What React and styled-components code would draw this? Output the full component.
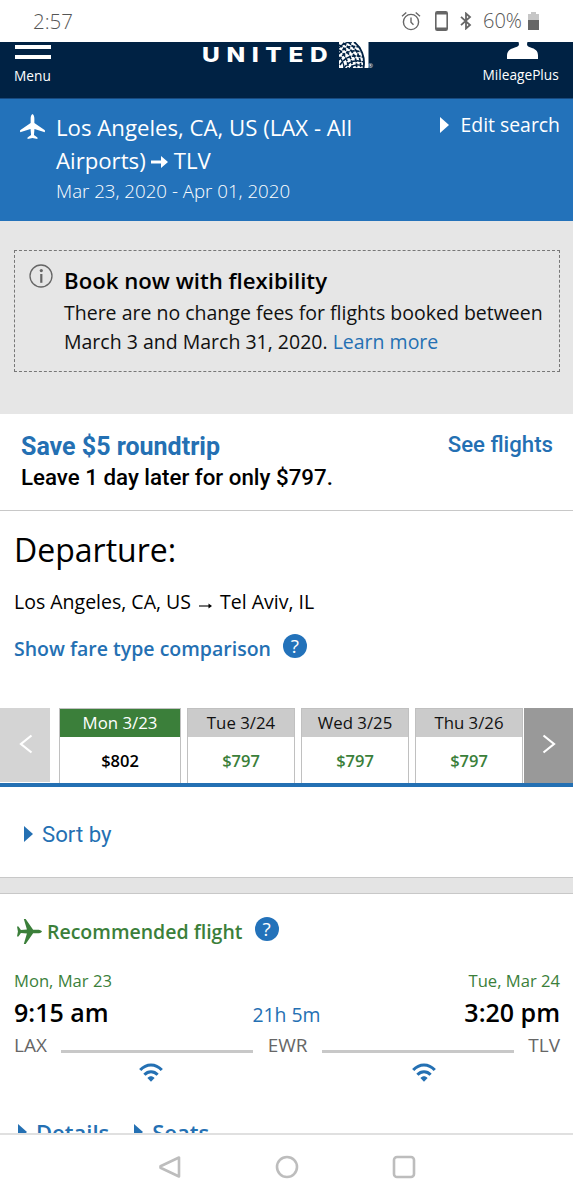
import React from "react";
import styled, { createGlobalStyle, css } from "styled-components";

const c = {
  navy: "#002244",
  blue: "#2372ba",
  link: "#2470b3",
  green: "#3b7f3a",
  grey: "#e6e6e6",
  line: "#c8c8c8",
  muted: "#666",
};

const GlobalStyle = createGlobalStyle`
  * { box-sizing: border-box; }
  body { margin: 0; background: #fff; }
  p, h1, h2, h3 { margin: 0; }
`;

const type = css`
  font-size: ${(p) => p.$size}px;
  line-height: ${(p) => p.$lh}px;
  white-space: nowrap;
`;

const Screen = styled.main`
  width: 573px;
  height: 1200px;
  overflow: hidden;
  display: flex;
  flex-direction: column;
  font-family: "Open Sans", "Noto Sans", sans-serif;
  color: #000;
  background: #fff;
`;

/* Status bar */
const StatusBar = styled.div`
  flex: none;
  height: 42px;
  padding: 0 34px 0 33px;
  display: flex;
  align-items: center;
  justify-content: space-between;
  color: ${c.muted};
`;
const StatusText = styled.span`
  ${type}
  font-weight: 300;
  color: #555;
`;
const StatusIcons = styled.div`
  display: flex;
  align-items: center;
  height: 42px;
`;
const AlarmSvg = styled.svg`margin-right: 14px;`;
const PhoneSvg = styled.svg`margin-right: 12px;`;
const BluetoothSvg = styled.svg`margin-right: 11px;`;
const BatterySvg = styled.svg`margin-left: 6px;`;

/* Site header */
const Header = styled.header`
  flex: none;
  height: 57px;
  background: ${c.navy};
  border-bottom: 1px solid #174a80;
  display: grid;
  grid-template-columns: 202px 1fr 104px;
  color: #fff;
  overflow: hidden;
`;
const MenuButton = styled.div`
  padding: 3px 0 0 14px;
`;
const Bars = styled.div`
  width: 36px;
  height: 14px;
  margin-left: 1px;
  border-top: 4px solid #fff;
  border-bottom: 4px solid #fff;
`;
const HeaderLabel = styled.div`
  ${type}
`;
const Brand = styled.div`
  display: flex;
  align-items: flex-start;
`;
const BrandName = styled.span`
  width: 137px;
  font-family: Inter, "Open Sans", sans-serif;
  font-weight: 800;
  font-size: 20.5px;
  line-height: 26px;
  letter-spacing: 5.6px;
  transform: scaleX(1.19);
  transform-origin: 0 0;
  white-space: nowrap;
`;
const Registered = styled.span`
  font-size: 6px;
  line-height: 8px;
  margin: 20px 0 0 -1px;
`;
const Account = styled.div`
  display: flex;
  flex-direction: column;
  align-items: flex-start;
  padding-left: 13.5px;
`;
const PersonSvg = styled.svg`
  margin-left: 24px;
`;

/* Trip summary */
const Trip = styled.section`
  flex: none;
  height: 122px;
  background: ${c.blue};
  color: #fff;
  display: flex;
  padding: 12px 13px 0 20px;
`;
const TripPlane = styled.svg`
  flex: none;
  margin: 3px 11px 0 0;
`;
const TripText = styled.div`
  flex: 1;
`;
const TripTitle = styled.h1`
  ${type}
  font-weight: 400;
`;
const TripArrow = styled.svg`
  margin: 0 6px 2px 5px;
  vertical-align: middle;
`;
const TripDates = styled.p`
  ${type}
  font-weight: 300;
`;
const EditSearch = styled.div`
  ${type}
  display: flex;
  align-items: center;
  height: 28px;
`;
const Caret = styled.svg`
  flex: none;
  margin-right: ${(p) => p.$gap}px;
`;

/* Flexibility notice */
const NoticeBand = styled.section`
  flex: none;
  height: 193px;
  background: ${c.grey};
  padding: 29px 13px 0 14px;
`;
const Notice = styled.div`
  height: 122px;
  border: 1px dashed #777;
  padding: 13px 0 0 14px;
  display: flex;
`;
const InfoSvg = styled.svg`
  flex: none;
  margin-right: 11px;
`;
const NoticeTitle = styled.h2`
  ${type}
  font-weight: 600;
  margin-top: 2px;
`;
const NoticeText = styled.p`
  ${type}
  color: #111;
  margin-top: 2px;
`;
const TextLink = styled.span`
  color: ${c.link};
`;

/* Saving offer */
const Offer = styled.section`
  flex: none;
  height: 97px;
  border-bottom: 1px solid ${c.line};
  padding: 18px 20px 0 21px;
  display: flex;
  justify-content: space-between;
  font-family: Roboto, sans-serif;
`;
const OfferTitle = styled.h2`
  ${type}
  font-weight: 700;
  color: ${c.link};
`;
const OfferText = styled.p`
  ${type}
  font-weight: 500;
`;
const OfferLink = styled.span`
  ${type}
  font-weight: 500;
  color: ${c.link};
  margin-top: -3px;
`;

/* Departure */
const Departure = styled.section`
  flex: none;
  height: 197px;
  padding: 17px 14px 0;
`;
const DepartureTitle = styled.h2`
  ${type}
  font-weight: 400;
`;
const Route = styled.p`
  ${type}
  margin-top: 16px;
`;
const RouteArrow = styled.svg`
  margin: 0 8px 0 8px;
  vertical-align: -1px;
`;
const FareRow = styled.div`
  display: flex;
  align-items: flex-start;
  margin-top: 18px;
`;
const FareLink = styled.span`
  ${type}
  font-weight: 600;
  color: ${c.link};
  margin-top: 1px;
`;
const Help = styled.span`
  flex: none;
  width: 24px;
  height: 24px;
  border-radius: 50%;
  background: ${c.blue};
  color: #fff;
  font-size: 19px;
  font-weight: 500;
  line-height: 24px;
  text-align: center;
  margin-left: ${(p) => p.$gap}px;
`;

/* Fare calendar */
const Calendar = styled.section`
  flex: none;
  height: 79px;
  border-bottom: 4px solid ${c.link};
  display: flex;
`;
const PageButton = styled.div`
  flex: none;
  width: ${(p) => p.$width}px;
  height: ${(p) => p.$height}px;
  background: ${(p) => p.$bg};
  display: flex;
  align-items: center;
  justify-content: center;
  padding: 0 0 3px 1px;
`;
const Days = styled.div`
  flex: 1;
  display: flex;
  gap: 6px;
  padding-left: 9px;
`;
const Day = styled.div`
  flex: none;
  width: ${(p) => (p.$active ? 122 : 108)}px;
  border: solid #c0c0c0;
  border-width: 1px 1px 0;
  text-align: center;
  color: ${(p) => (p.$active ? "#000" : c.green)};
`;
const DayName = styled.div`
  ${type}
  background: ${(p) => (p.$active ? c.green : "#cbcbcb")};
  color: ${(p) => (p.$active ? "#fff" : "#111")};
  height: 28px;
`;
const DayPrice = styled.div`
  ${type}
  font-weight: 600;
`;

/* Sort */
const Sort = styled.section`
  flex: none;
  height: 90px;
  padding: 32px 24px 0;
  font-family: Roboto, sans-serif;
  color: ${c.link};
`;
const SortLabel = styled.div`
  ${type}
  display: flex;
  align-items: center;
`;
const Divider = styled.div`
  flex: none;
  height: 17px;
  background: #e4e4e4;
  border: solid ${c.line};
  border-width: 1px 0;
`;

/* Flight card */
const Flight = styled.section`
  flex: none;
  height: 239px;
  padding: 23px 13px 0 14px;
  overflow: hidden;
`;
const Badge = styled.div`
  display: flex;
  height: 27px;
`;
const BadgePlane = styled.svg`
  flex: none;
  margin: 2px 5px 0 3px;
`;
const BadgeText = styled.span`
  ${type}
  font-weight: 600;
  color: ${c.green};
  margin-top: 1px;
`;
const Row = styled.div`
  display: flex;
  justify-content: space-between;
  align-items: ${(p) => p.$align || "baseline"};
  margin-top: ${(p) => p.$top || 0}px;
`;
const FlightDate = styled.span`
  ${type}
  color: ${c.green};
`;
const FlightTime = styled.span`
  ${type}
  font-weight: 600;
`;
const Duration = styled.span`
  ${type}
  color: ${c.link};
`;
const Airport = styled.span`
  ${type}
  color: ${c.muted};
`;
const Leg = styled.span`
  width: 192px;
  height: 3px;
  margin-top: 13px;
  background: ${c.line};
`;
const Amenities = styled.div`
  display: flex;
  gap: 249px;
  padding: 5px 0 0 125px;
`;
const Actions = styled.div`
  display: flex;
  gap: 25px;
  padding-left: 4px;
  margin-top: 36px;
`;
const Action = styled.span`
  ${type}
  font-weight: 600;
  color: ${c.link};
  display: flex;
  align-items: center;
`;

/* Navigation bar */
const NavBar = styled.nav`
  flex: none;
  height: 67px;
  border-top: 2px solid #e0e0e0;
  background: #fff;
  display: flex;
  justify-content: center;
  gap: 93px;
  padding-top: 19.5px;
`;

const planePath =
  "M12 0C13.2 .5 13.8 2.5 13.8 4.6V8.6L24 15.8V17.6L13.9 14.6L13.4 20.4L16.8 22.8V24.2L12 23.3L7.2 24.2V22.8L10.6 20.4L10.1 14.6L0 17.6V15.8L10.2 8.6V4.6C10.2 2.5 10.8 .5 12 0Z";

const Triangle = ({ gap, color, w = 9, h = 16 }) => (
  <Caret $gap={gap} width={w} height={h} viewBox="0 0 9 16">
    <path d="M0 0L9 8L0 16Z" fill={color} />
  </Caret>
);

const Wifi = () => (
  <svg width="24" height="19" viewBox="0 0 24 19" fill="none" stroke={c.link} strokeWidth="3">
    <path d="M1.2 7C7.4 .2 16.6 .2 22.8 7" />
    <path d="M5.4 11.8C9.2 7.8 14.8 7.8 18.6 11.8" />
    <path d="M8.4 15C10.6 12.8 13.4 12.8 15.6 15L12 18.8Z" fill={c.link} stroke="none" />
  </svg>
);

const Globe = () => (
  <svg width="30" height="26" viewBox="0 0 30 26">
    <path d="M0 0H29.5V26H0Z" fill="#fff" />
    <g fill="none" stroke={c.navy}>
      <path d="M15 0C22 5 26.5 15 24.5 26" strokeWidth="1.9" />
      <path d="M9 0C16 5 22.5 15 21.5 26" strokeWidth="1.6" strokeDasharray="4.2 .8" />
      <path d="M4 1C12 6 18.5 16 17.5 26" strokeWidth="1.7" strokeDasharray="4 1" />
      <path d="M0 3C8 7 14 17 13 26" strokeWidth="1.7" strokeDasharray="4 1" />
      <path d="M0 8C5 11 9.5 19 9 26" strokeWidth="1.6" strokeDasharray="4 1" />
      <path d="M0 15C3 17 5 22 5 26" strokeWidth="1.3" />
      <path d="M0 6C3 2 7 0 13 0" strokeWidth="1.3" />
      <path d="M0 12C5 5 12 3 19 5" strokeWidth="1.5" strokeDasharray="4 1" />
      <path d="M0 18C5 10 13 7 22 10" strokeWidth="1.6" strokeDasharray="4 1" />
      <path d="M1 23C6 15 14 12 24 15" strokeWidth="1.6" strokeDasharray="4 1" />
      <path d="M5 26C9 20 16 17 24.5 20" strokeWidth="1.5" strokeDasharray="4 1" />
      <path d="M11 26C14 23 19 22 24 24" strokeWidth="1.3" />
    </g>
  </svg>
);

const days = [
  { name: "Mon 3/23", price: "$802", active: true },
  { name: "Tue 3/24", price: "$797" },
  { name: "Wed 3/25", price: "$797" },
  { name: "Thu 3/26", price: "$797" },
];

export default function App() {
  return (
    <Screen>
      <GlobalStyle />
      <StatusBar>
        <StatusText $size={20.5} $lh={42}>2:57</StatusText>
        <StatusIcons>
          <AlarmSvg width="20" height="20" viewBox="0 0 20 20" fill="none" stroke={c.muted} strokeWidth="1.4">
            <circle cx="10" cy="11" r="7.6" />
            <path d="M10 6.5V11.3L12.5 13.8M1 5.2L5.3 1.5M19 5.2L14.7 1.5" />
          </AlarmSvg>
          <PhoneSvg width="13" height="20" viewBox="0 0 13 20">
            <rect x=".8" y=".8" width="11.4" height="18.4" rx="1.4" fill="none" stroke={c.muted} strokeWidth="1.6" />
            <path d="M1 1H12V3.5H1ZM1 16.5H12V19H1Z" fill={c.muted} />
          </PhoneSvg>
          <BluetoothSvg width="12" height="18" viewBox="0 0 12 18" fill="none" stroke={c.muted} strokeWidth="1.8">
            <path d="M1 4.8L10 13L6 16.5V1.5L10 5L1 13.2" />
          </BluetoothSvg>
          <StatusText $size={20} $lh={42}>60%</StatusText>
          <BatterySvg width="11" height="18" viewBox="0 0 11 18">
            <path d="M3 0H8V2H11V8H0V2H3Z" fill="#c6c6c6" />
            <path d="M0 8H11V18H0Z" fill={c.muted} />
          </BatterySvg>
        </StatusIcons>
      </StatusBar>

      <Header>
        <MenuButton>
          <Bars />
          <HeaderLabel $size={13.7} $lh={34}>Menu</HeaderLabel>
        </MenuButton>
        <Brand>
          <BrandName>UNITED</BrandName>
          <Globe />
          <Registered>®</Registered>
        </Brand>
        <Account>
          <PersonSvg width="32" height="17" viewBox="0 0 32 17">
            <path d="M11.5 0H20.5C19.5 3 20 4.3 23 5.3C28.5 7 31 9 31 13.5V17H0V13.5C0 9 3 7 8.5 5.3C12 4.3 12.5 3 11.5 0Z" fill="#fff" />
          </PersonSvg>
          <HeaderLabel $size={13.7} $lh={32}>MileagePlus</HeaderLabel>
        </Account>
      </Header>

      <Trip>
        <TripPlane width="25" height="25" viewBox="0 0 24 24.2">
          <path d={planePath} fill="#fff" />
        </TripPlane>
        <TripText>
          <TripTitle $size={22.2} $lh={33}>
            Los Angeles, CA, US (LAX - All
            <br />
            Airports)
            <TripArrow width="17" height="12" viewBox="0 0 17 12">
              <path d="M0 4.6H10V0L17 6L10 12V7.4H0Z" fill="#fff" />
            </TripArrow>
            TLV
          </TripTitle>
          <TripDates $size={18.7} $lh={28}>Mar 23, 2020 - Apr 01, 2020</TripDates>
        </TripText>
        <EditSearch $size={19.4} $lh={28}>
          <Triangle gap={12} color="#fff" />
          Edit search
        </EditSearch>
      </Trip>

      <NoticeBand>
        <Notice>
          <InfoSvg width="24" height="24" viewBox="0 0 24 24">
            <circle cx="12" cy="12" r="11" fill="none" stroke="#666" strokeWidth="1.3" />
            <circle cx="12.3" cy="6.6" r="1.6" fill="#666" />
            <path d="M11.2 10H13.4V18.8H11.2Z" fill="#666" />
          </InfoSvg>
          <div>
            <NoticeTitle $size={22.2} $lh={30}>Book now with flexibility</NoticeTitle>
            <NoticeText $size={19.5} $lh={29}>
              There are no change fees for flights booked between
              <br />
              March 3 and March 31, 2020. <TextLink>Learn more</TextLink>
            </NoticeText>
          </div>
        </Notice>
      </NoticeBand>

      <Offer>
        <div>
          <OfferTitle $size={25} $lh={30}>Save $5 roundtrip</OfferTitle>
          <OfferText $size={22.3} $lh={30}>Leave 1 day later for only $797.</OfferText>
        </div>
        <OfferLink $size={22.2} $lh={30}>See flights</OfferLink>
      </Offer>

      <Departure>
        <DepartureTitle $size={32} $lh={44}>Departure:</DepartureTitle>
        <Route $size={19.5} $lh={28}>
          Los Angeles, CA, US
          <RouteArrow width="13" height="8" viewBox="0 0 13 8">
            <path d="M0 4H11" stroke="#000" strokeWidth="1.1" />
            <path d="M9.5 1.5L13 4L9.5 6.5Z" />
          </RouteArrow>
          Tel Aviv, IL
        </Route>
        <FareRow>
          <FareLink $size={19.5} $lh={28}>Show fare type comparison</FareLink>
          <Help $gap={12}>?</Help>
        </FareRow>
      </Departure>

      <Calendar>
        <PageButton $width={50} $height={74} $bg="#d4d4d4">
          <svg width="14" height="20" viewBox="0 0 14 20" fill="none" stroke="#fff" strokeWidth="2.2">
            <path d="M12.5 1.5L2 10L12.5 18.5" />
          </svg>
        </PageButton>
        <Days>
          {days.map((d) => (
            <Day key={d.name} $active={d.active}>
              <DayName $size={16.8} $lh={28} $active={d.active}>{d.name}</DayName>
              <DayPrice $size={16.5} $lh={47}>{d.price}</DayPrice>
            </Day>
          ))}
        </Days>
        <PageButton $width={49} $height={75} $bg="#999">
          <svg width="14" height="20" viewBox="0 0 14 20" fill="none" stroke="#fff" strokeWidth="2.2">
            <path d="M1.5 1.5L12 10L1.5 18.5" />
          </svg>
        </PageButton>
      </Calendar>

      <Sort>
        <SortLabel $size={22.2} $lh={30}>
          <Triangle gap={9} color={c.link} />
          Sort by
        </SortLabel>
      </Sort>
      <Divider />

      <Flight>
        <Badge>
          <BadgePlane width="25" height="25" viewBox="0 0 24.2 24">
            <path d={planePath} fill={c.green} transform="translate(24.2 0) rotate(90)" />
          </BadgePlane>
          <BadgeText $size={19.5} $lh={28}>Recommended flight</BadgeText>
          <Help $gap={12}>?</Help>
        </Badge>
        <Row $top={24}>
          <FlightDate $size={16.6} $lh={26}>Mon, Mar 23</FlightDate>
          <FlightDate $size={16.6} $lh={26}>Tue, Mar 24</FlightDate>
        </Row>
        <Row $top={1}>
          <FlightTime $size={25} $lh={34}>9:15 am</FlightTime>
          <Duration $size={19.4} $lh={34}>21h 5m</Duration>
          <FlightTime $size={25} $lh={34}>3:20 pm</FlightTime>
        </Row>
        <Row $align="center">
          <Airport $size={19} $lh={26}>LAX</Airport>
          <Leg />
          <Airport $size={19} $lh={26}>EWR</Airport>
          <Leg />
          <Airport $size={19} $lh={26}>TLV</Airport>
        </Row>
        <Amenities>
          <Wifi />
          <Wifi />
        </Amenities>
        <Actions>
          <Action $size={22} $lh={28}>
            <Triangle gap={9} color={c.link} />
            Details
          </Action>
          <Action $size={22} $lh={28}>
            <Triangle gap={9} color={c.link} />
            Seats
          </Action>
        </Actions>
      </Flight>

      <NavBar>
        <svg width="24" height="24" viewBox="0 0 24 24" fill="none" stroke="#bdbdbd" strokeWidth="2.6" strokeLinejoin="round">
          <path d="M21 2.5V21.5L2.5 12.8V11.2Z" />
        </svg>
        <svg width="24" height="24" viewBox="0 0 24 24" fill="none" stroke="#bdbdbd" strokeWidth="2.6">
          <circle cx="12" cy="12" r="10" />
        </svg>
        <svg width="24" height="24" viewBox="0 0 24 24" fill="none" stroke="#bdbdbd" strokeWidth="2.6">
          <rect x="2" y="2" width="20" height="20" rx="3" />
        </svg>
      </NavBar>
    </Screen>
  );
}
